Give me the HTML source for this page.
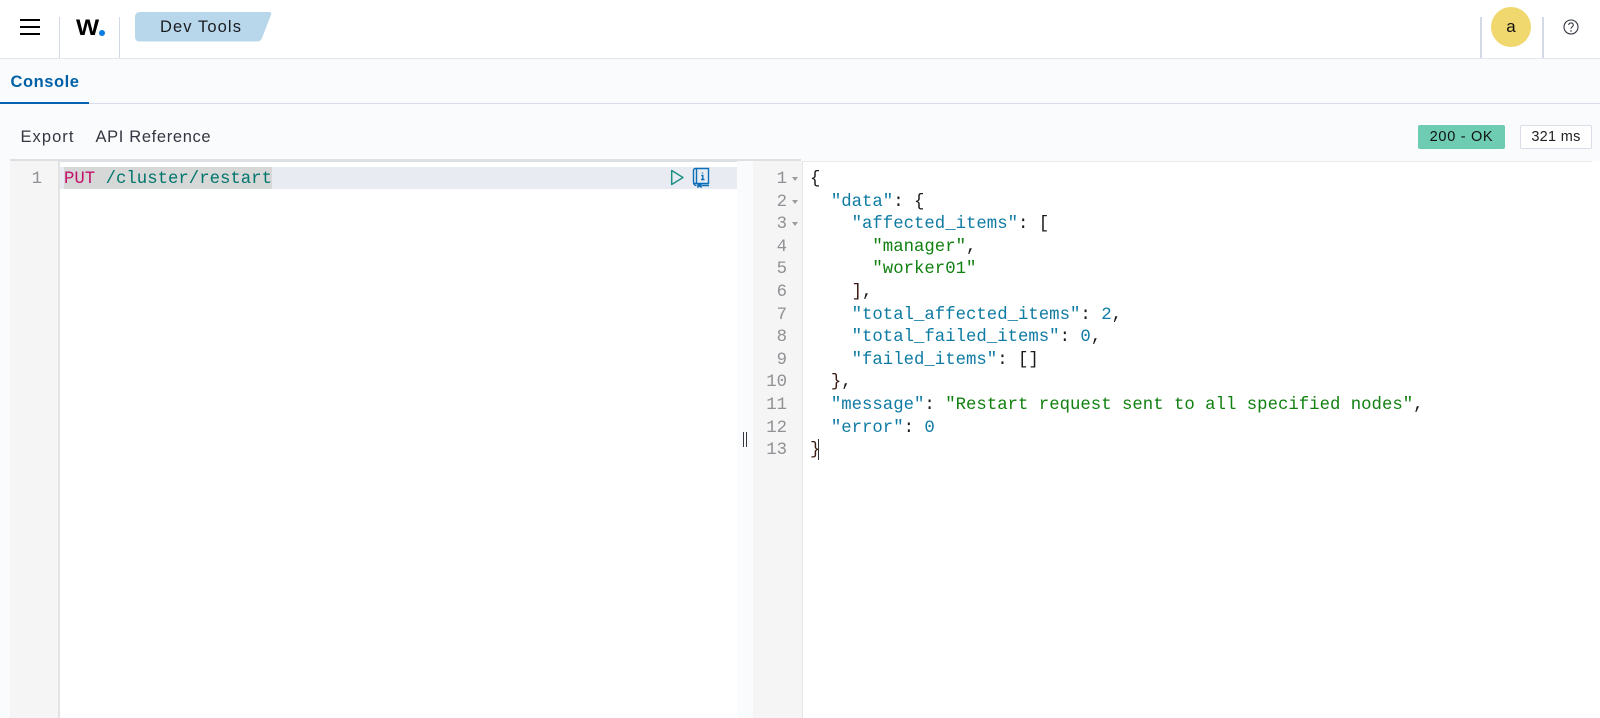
<!DOCTYPE html>
<html><head><meta charset="utf-8"><style>
html,body{margin:0;padding:0;width:1600px;height:718px;overflow:hidden;background:#fafbfd;font-family:"Liberation Sans",sans-serif;color:#1a1c21}
.a{position:absolute}
.t{position:absolute;white-space:pre;line-height:20px}
.m{position:absolute;white-space:pre;font-family:"Liberation Mono",monospace;font-size:17.33px;line-height:22.6px;height:22.6px}
.n{position:absolute;font-family:"Liberation Mono",monospace;font-size:17.33px;line-height:22.6px;color:#8f9194;text-align:right;white-space:pre}
.k{color:#0f7ba3}.s{color:#118011}.p{color:#1a1a1a}.d{color:#0f7ba3}.r{color:#3a1a10}
.f{position:absolute;left:792px;width:0;height:0;border-left:3px solid transparent;border-right:3px solid transparent;border-top:4.5px solid #9a9c9f}
</style></head><body>
<div class="a" style="left:0;top:0;width:1600px;height:58px;background:#fff;border-bottom:1px solid #e3e6ee;box-sizing:content-box"></div>
<div class="a" style="left:20px;top:19px;width:20px;height:2px;background:#000"></div>
<div class="a" style="left:20px;top:26px;width:20px;height:2px;background:#000"></div>
<div class="a" style="left:20px;top:32.5px;width:20px;height:2px;background:#000"></div>
<div class="a" style="left:59px;top:17px;width:1px;height:41px;background:#d3dae6"></div>
<div class="a" style="left:119px;top:17px;width:1px;height:41px;background:#d3dae6"></div>
<div class="t" style="left:75.5px;top:18px;font-size:22.5px;font-weight:700;color:#000;transform:scaleX(1.09);transform-origin:0 50%">W</div>
<div class="a" style="left:99.3px;top:29.6px;width:6px;height:6px;border-radius:50%;background:#0a7be0"></div>
<svg class="a" style="left:135px;top:12px" width="137" height="30"><path d="M5 0H134Q137 0 136 3L127 26Q126 29.5 122 29.5H5Q0 29.5 0 25V5Q0 0 5 0Z" fill="#b9d7ea"/></svg>
<div class="t" style="left:160px;top:17px;font-size:16.5px;letter-spacing:1.1px;color:#1a1c21">Dev Tools</div>
<div class="a" style="left:1480px;top:17px;width:1.5px;height:41px;background:#d3dae6"></div>
<div class="a" style="left:1542px;top:17px;width:1.5px;height:41px;background:#d3dae6"></div>
<div class="a" style="left:1491px;top:7px;width:40px;height:40px;border-radius:50%;background:#f0d76e"></div>
<div class="t" style="left:1491px;top:17px;width:40px;text-align:center;font-size:17px;color:#111">a</div>
<svg class="a" style="left:1563px;top:19px" width="16" height="16" viewBox="0 0 16 16"><circle cx="8" cy="8" r="7" fill="none" stroke="#343741" stroke-width="1.1"/><path d="M5.7 6C5.7 3.2 10.3 3.2 10.3 6C10.3 7.8 8 7.8 8 9.8" fill="none" stroke="#343741" stroke-width="1.1"/><circle cx="8" cy="11.9" r=".8" fill="#343741"/></svg>
<div class="a" style="left:0;top:103px;width:1600px;height:1px;background:#d9dde8"></div>
<div class="a" style="left:0;top:102px;width:89px;height:2px;background:#0061b0"></div>
<div class="t" style="left:10.5px;top:72px;font-size:16.5px;font-weight:700;letter-spacing:.55px;color:#0061a6">Console</div>
<div class="t" style="left:20.5px;top:127px;font-size:16.5px;letter-spacing:1.05px;color:#343741">Export</div>
<div class="t" style="left:95.5px;top:127px;font-size:16.5px;letter-spacing:.65px;color:#343741">API Reference</div>
<div class="a" style="left:1418px;top:125px;width:87px;height:24px;border-radius:2px;background:#6dccb1"></div>
<div class="t" style="left:1418px;top:127px;width:87px;text-align:center;font-size:14.5px;letter-spacing:.7px;color:#111">200 - OK</div>
<div class="a" style="left:1520px;top:125px;width:72px;height:24px;box-sizing:border-box;border:1px solid #d9dde8;border-radius:2px;background:#fff"></div>
<div class="t" style="left:1520px;top:127px;width:72px;text-align:center;font-size:14.5px;letter-spacing:.3px;color:#222">321 ms</div>

<div class="a" style="left:10px;top:161px;width:1582px;height:557px;background:#fff"></div>
<div class="a" style="left:1592px;top:161px;width:8px;height:557px;background:#fff"></div>
<div class="a" style="left:10px;top:159px;width:791px;height:2.5px;background:#dcdfe4"></div>
<div class="a" style="left:801px;top:161px;width:791px;height:1px;background:#e6e8ec"></div>
<div class="a" style="left:10px;top:161px;width:48px;height:557px;background:#f5f5f5"></div>
<div class="a" style="left:58px;top:161px;width:1.5px;height:557px;background:#e3e3e3"></div>
<div class="a" style="left:737px;top:161px;width:16px;height:557px;background:#fafbfd"></div>
<div class="a" style="left:753px;top:161px;width:49px;height:557px;background:#f5f5f5"></div>
<div class="a" style="left:802px;top:161px;width:1px;height:557px;background:#e6e6e6"></div>
<div class="a" style="left:59.5px;top:167px;width:677.5px;height:22px;background:#e8ebf2"></div>
<div class="a" style="left:64px;top:167px;width:208px;height:22px;background:#d6d8d8"></div>
<div class="n" style="left:10px;width:32px;top:169px">1</div>
<div class="m" style="left:64px;top:169px"><span style="color:#c5106a">PUT</span><span style="color:#00756c"> /cluster/restart</span></div>
<svg class="a" style="left:669px;top:168px" width="16" height="19" viewBox="0 0 16 19"><path d="M2.7 2.5V16.5L14 9.5Z" fill="none" stroke="#1f9086" stroke-width="1.5" stroke-linejoin="round"/></svg>
<svg class="a" style="left:692px;top:167px" width="18" height="21" viewBox="0 0 18 21" fill="none" stroke="#0a6fb8" stroke-width="1.4"><path d="M3.5 1.5H16.5V16.5H3.5C1.8 16.5 1.5 15.5 1.5 14.5V3.5C1.5 2.3 2.3 1.5 3.5 1.5Z"/><path d="M4.5 1.5V16.5M1.5 16C2 18 3 18.5 4.5 18.5M10 18.5H17"/><path d="M10.5 5.5V6.5M9.3 8.5H10.8V12.5M9 12.5H12.5"/><path d="M6 16.5V20L7.5 18.8L9 20V16.5" fill="#0a6fb8"/></svg>
<div class="a" style="left:743px;top:432px;width:1.3px;height:15px;background:#343741"></div>
<div class="a" style="left:746px;top:432px;width:1.3px;height:15px;background:#343741"></div>

<div class="n" style="left:753px;width:34px;top:169px">1
2
3
4
5
6
7
8
9
10
11
12
13</div>
<div class="f" style="top:177px"></div><div class="f" style="top:200px"></div><div class="f" style="top:222px"></div>

<div class="m" style="left:810px;top:169px"><span class="p">{</span></div>
<div class="m" style="left:810px;top:191.6px">  <span class="k">"data"</span><span class="p">: {</span></div>
<div class="m" style="left:810px;top:214.2px">    <span class="k">"affected_items"</span><span class="p">: [</span></div>
<div class="m" style="left:810px;top:236.8px">      <span class="s">"manager"</span><span class="p">,</span></div>
<div class="m" style="left:810px;top:259.4px">      <span class="s">"worker01"</span></div>
<div class="m" style="left:810px;top:282px">    <span class="r">]</span><span class="p">,</span></div>
<div class="m" style="left:810px;top:304.6px">    <span class="k">"total_affected_items"</span><span class="p">: </span><span class="d">2</span><span class="p">,</span></div>
<div class="m" style="left:810px;top:327.2px">    <span class="k">"total_failed_items"</span><span class="p">: </span><span class="d">0</span><span class="p">,</span></div>
<div class="m" style="left:810px;top:349.8px">    <span class="k">"failed_items"</span><span class="p">: []</span></div>
<div class="m" style="left:810px;top:372.4px">  <span class="r">}</span><span class="p">,</span></div>
<div class="m" style="left:810px;top:395px">  <span class="k">"message"</span><span class="p">: </span><span class="s">"Restart request sent to all specified nodes"</span><span class="p">,</span></div>
<div class="m" style="left:810px;top:417.6px">  <span class="k">"error"</span><span class="p">: </span><span class="d">0</span></div>
<div class="m" style="left:810px;top:440.2px"><span class="r">}</span></div>
<div class="a" style="left:818px;top:439px;width:1px;height:21px;background:#333"></div>
</body></html>
